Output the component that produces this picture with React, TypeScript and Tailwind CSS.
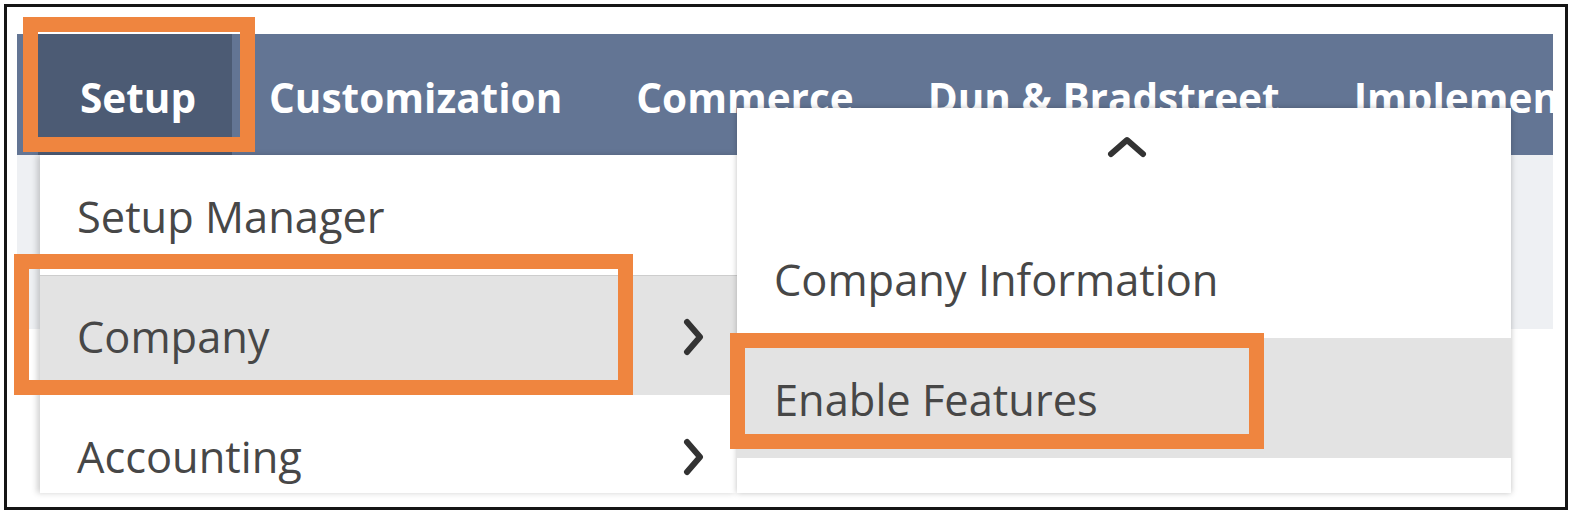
import React from 'react';

const navItems = ['Setup', 'Customization', 'Commerce', 'Dun & Bradstreet', 'Implementation'];

const ChevronRight: React.FC = () => (
  <svg width="22" height="38" viewBox="0 0 22 38" className="shrink-0">
    <polyline points="4,4 17,19 4,34" fill="none" stroke="#333" strokeWidth="6" strokeLinecap="round" strokeLinejoin="round" />
  </svg>
);

const ChevronUp: React.FC = () => (
  <svg width="40" height="22" viewBox="0 0 40 22">
    <polyline points="4,18 20,4 36,18" fill="none" stroke="#333" strokeWidth="6" strokeLinecap="round" strokeLinejoin="round" />
  </svg>
);

const MenuRow: React.FC<{ label: string; active?: boolean; sub?: boolean; divider?: boolean }> = ({ label, active, sub, divider }) => (
  <div
    className={`h-[120px] shrink-0 flex items-center justify-between pl-[37px] pr-[32px] pt-[3px] ${active ? 'bg-[#e3e3e3]' : ''} ${divider ? 'border-t border-[#cdcdcd]' : ''}`}
  >
    <span className="text-[43.4px] text-[#474747] whitespace-nowrap">{label}</span>
    {sub && <ChevronRight />}
  </div>
);

const App: React.FC = () => {
  return (
    <div className="w-[1572px] h-[514px] bg-white p-[4px] font-['Open_Sans',sans-serif]">
      <div className="h-full border-[3px] border-[#151515] relative overflow-hidden bg-white">
        {/* page behind the menus */}
        <div className="ml-[10px] mt-[27px] w-[1536px]">
          <nav className="h-[121px] bg-[#637594] flex items-stretch pl-[21px] overflow-hidden whitespace-nowrap">
            {navItems.map((item, i) => (
              <div
                key={item}
                className={`flex items-center pt-[7px] text-[40.5px] font-bold text-white ${i === 0 ? 'bg-[#4c5b74] pl-[42px] pr-[36px]' : 'px-[37px]'}`}
              >
                {item}
              </div>
            ))}
          </nav>
          <div className="h-[174px] bg-[#eef0f3]" />
        </div>

        {/* Setup dropdown */}
        <div className="absolute left-[33px] top-[148px] w-[697px] h-[338px] bg-white flex flex-col overflow-hidden shadow-[-3px_0_6px_rgba(0,0,0,0.18)]">
          <MenuRow label="Setup Manager" />
          <MenuRow label="Company" active sub divider />
          <MenuRow label="Accounting" sub />
        </div>

        {/* Company submenu */}
        <div className="absolute left-[730px] top-[101px] w-[774px] h-[385px] bg-white flex flex-col overflow-hidden shadow-[0_0_6px_rgba(0,0,0,0.25)]">
          <div className="h-[110px] shrink-0 flex justify-center pt-[28px] pl-[6px]">
            <ChevronUp />
          </div>
          <MenuRow label="Company Information" />
          <MenuRow label="Enable Features" active />
        </div>

        {/* annotation boxes */}
        <div className="absolute left-[16px] top-[10px] w-[232px] h-[135px] border-[15px] border-[#ef853f]" />
        <div className="absolute left-[7px] top-[247px] w-[619px] h-[141px] border-[15px] border-[#ef853f]" />
        <div className="absolute left-[723px] top-[326px] w-[534px] h-[116px] border-[15px] border-[#ef853f]" />
      </div>
    </div>
  );
};

export default App;
